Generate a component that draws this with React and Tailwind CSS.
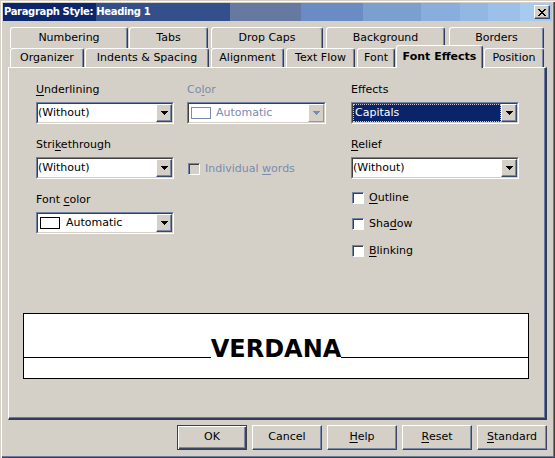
import React from 'react';

// Classic 3D dialog look: light face, white highlight, dark bluish shadow
const raised =
  'bg-[#d4d0c8] border border-t-white border-l-white border-r-[#3a4766] border-b-[#3a4766] shadow-[inset_-1px_-1px_0_#7a89aa]';
const sunken =
  'border border-t-[#7383a6] border-l-[#7383a6] border-r-white border-b-white';

function Arrow({ color = '#000' }) {
  return (
    <svg width="7" height="4" viewBox="0 0 7 4" shapeRendering="crispEdges">
      <rect x="0" y="0" width="7" height="1" fill={color} />
      <rect x="1" y="1" width="5" height="1" fill={color} />
      <rect x="2" y="2" width="3" height="1" fill={color} />
      <rect x="3" y="3" width="1" height="1" fill={color} />
    </svg>
  );
}

function Tab({ label, w, ml, active }) {
  if (active) {
    return (
      <div
        className={`${w} ${ml} relative z-10 h-[23px] -mb-px flex items-center justify-center bg-[#d4d0c8] rounded-t-[3px] border-t border-l border-white border-r border-r-[#2f3c5c] shadow-[inset_-1px_0_0_#7a89aa] font-bold`}
      >
        {label}
      </div>
    );
  }
  return (
    <div
      className={`${w} ${ml} h-full flex items-center justify-center bg-[#d4d0c8] rounded-t-[3px] border-t border-l border-white border-r border-r-[#2f3c5c] shadow-[inset_-1px_0_0_#7a89aa]`}
    >
      {label}
    </div>
  );
}

function Select({ children, disabled, focused }) {
  return (
    <div className={`h-[22px] flex ${sunken}`}>
      <div className="flex flex-1 bg-white border border-t-[#404040] border-l-[#404040] border-r-[#d4d0c8] border-b-[#d4d0c8]">
        {focused ? (
          <div className="flex-1 flex items-center bg-[#0a246a] border border-dotted border-[#c8c8d8] text-white pl-px">
            {children}
          </div>
        ) : (
          <div className="flex-1 flex items-center min-w-0">{children}</div>
        )}
        <div
          className={`w-[16px] flex items-center justify-center bg-[#d4d0c8] border ${
            disabled
              ? 'border-t-white border-l-white border-r-[#8a98b6] border-b-[#8a98b6]'
              : 'border-t-white border-l-white border-r-[#3a4766] border-b-[#3a4766] shadow-[inset_-1px_-1px_0_#7a89aa]'
          }`}
        >
          <Arrow color={disabled ? '#7a8bae' : '#000'} />
        </div>
      </div>
    </div>
  );
}

function Swatch({ disabled }) {
  return (
    <div
      className={`ml-[2px] w-[20px] h-[12px] bg-white border ${
        disabled ? 'border-[#7a8bae]' : 'border-black'
      }`}
    />
  );
}

function Check({ children, disabled, className = '' }) {
  return (
    <div className={`h-[12px] flex items-center ${className}`}>
      <div
        className={`ml-px w-[12px] h-[12px] shrink-0 ${sunken} shadow-[inset_1px_1px_0_#404040] ${
          disabled ? 'bg-[#d4d0c8]' : 'bg-white'
        }`}
      />
      <span className={`ml-[5px] leading-[14px] ${disabled ? 'text-[#7a8bae]' : ''}`}>{children}</span>
    </div>
  );
}

function Button({ children, primary }) {
  return (
    <div
      className={`w-[70px] h-[25px] flex items-center justify-center ${
        primary
          ? 'bg-[#d4d0c8] border border-[#404040] shadow-[inset_1px_1px_0_#fff,inset_-1px_-1px_0_#3a4766,inset_-2px_-2px_0_#7a89aa]'
          : raised
      }`}
    >
      {children}
    </div>
  );
}

const U = ({ children }) => <span className="underline underline-offset-[2px]">{children}</span>;

export default function App() {
  return (
    <div className="w-[555px] h-[458px] bg-[#d4d0c8] px-[3px] pt-[3px] flex flex-col text-[11px] text-black font-['DejaVu_Sans',Verdana,sans-serif] shadow-[inset_1px_1px_0_#d4d0c8,inset_2px_2px_0_#fff,inset_-1px_-1px_0_#404040,inset_-2px_-2px_0_#6a7aa0]">
      {/* title bar */}
      <div className="h-[18px] flex items-center justify-between bg-[image:linear-gradient(90deg,#0c266b_0_93px,#33508d_93px_227px,#6679a1_227px_298px,#6a8bc3_298px_360px,#7ba0d0_360px_418px,#89addc_418px_457px,#93b7e3_457px_485px,#9cc0ea_485px_517px,#a6caf0_517px)]">
        <span className="pl-px text-white font-bold text-[10px] tracking-[-0.35px] leading-none">Paragraph Style: Heading 1</span>
        <div className={`mr-[2px] w-[16px] h-[14px] flex items-center justify-center ${raised}`}>
          <svg width="8" height="7" viewBox="0 0 8 7" shapeRendering="crispEdges">
            <path d="M0 0h2l2 2.5L6 0h2L5 3.5 8 7H6L4 4.5 2 7H0l3-3.5z" fill="#000" />
          </svg>
        </div>
      </div>

      {/* tab rows */}
      <div className="mt-[6px] h-[21px] flex">
        <Tab label="Numbering" w="w-[118px]" ml="ml-[7px]" />
        <Tab label="Tabs" w="w-[79px]" ml="ml-[1px]" />
        <Tab label="Drop Caps" w="w-[112px]" ml="ml-[3px]" />
        <Tab label="Background" w="w-[119px]" ml="ml-[3px]" />
        <Tab label="Borders" w="w-[95px]" ml="ml-[4px]" />
      </div>
      <div className="h-[19px] flex items-end">
        <Tab label="Organizer" w="w-[74px]" ml="ml-[7px]" />
        <Tab label="Indents & Spacing" w="w-[124px]" ml="ml-[1px]" />
        <Tab label="Alignment" w="w-[73px]" ml="ml-[2px]" />
        <Tab label="Text Flow" w="w-[69px]" ml="ml-[2px]" />
        <Tab label="Font" w="w-[38px]" ml="ml-[2px]" />
        <Tab label="Font Effects" w="w-[87px]" ml="ml-[1px]" active />
        <Tab label="Position" w="w-[60px]" ml="ml-[1px]" />
      </div>

      {/* tab page */}
      <div className="ml-[5px] w-[539px] h-[353px] flex flex-col pt-[14px] border-t border-l border-white border-r-2 border-b-2 border-r-[#2f3c5c] border-b-[#2f3c5c] shadow-[inset_-1px_-1px_0_#6a7aa0]">
        <div className="h-[231px] flex leading-[14px]">
          <div className="ml-[27px] w-[138px] flex flex-col">
            <span className="h-[14px] pt-px"><U>U</U>nderlining</span>
            <div className="mt-[6px]">
              <Select>(Without)</Select>
            </div>
            <span className="mt-[13px] h-[14px] pt-px">Stri<U>k</U>ethrough</span>
            <div className="mt-[6px]">
              <Select>(Without)</Select>
            </div>
            <span className="mt-[13px] h-[14px] pt-px">Font <U>c</U>olor</span>
            <div className="mt-[6px]">
              <Select>
                <Swatch />
                <span className="ml-[6px]">Automatic</span>
              </Select>
            </div>
          </div>

          <div className="ml-[13px] w-[139px] flex flex-col">
            <span className="h-[14px] pt-px text-[#7a8bae]">Co<U>l</U>or</span>
            <div className="mt-[6px]">
              <Select disabled>
                <Swatch disabled />
                <span className="ml-[5px] text-[#7a8bae]">Automatic</span>
              </Select>
            </div>
            <Check disabled className="mt-[39px]">
              Individual <U>w</U>ords
            </Check>
          </div>

          <div className="ml-[25px] w-[168px] flex flex-col">
            <span className="h-[14px] pt-px">Effects</span>
            <div className="mt-[6px]">
              <Select focused>Capitals</Select>
            </div>
            <span className="mt-[13px] h-[14px] pt-px"><U>R</U>elief</span>
            <div className="mt-[6px]">
              <Select>(Without)</Select>
            </div>
            <Check className="mt-[13px]"><U>O</U>utline</Check>
            <Check className="mt-[14px]">Sha<U>d</U>ow</Check>
            <Check className="mt-[15px]"><U>B</U>linking</Check>
          </div>
        </div>

        {/* preview */}
        <div className="ml-[14px] w-[506px] h-[66px] bg-white border border-black">
          <div className="mt-[26px] h-[18px] flex items-end">
            <div className="flex-1 h-px bg-black" />
            <span className="text-[24px] leading-[18px] font-bold">VERDANA</span>
            <div className="flex-1 h-px bg-black" />
          </div>
        </div>
      </div>

      {/* dialog buttons */}
      <div className="mt-[5px] pr-[5px] flex justify-end gap-[5px]">
        <Button primary>OK</Button>
        <Button>Cancel</Button>
        <Button><U>H</U>elp</Button>
        <Button><U>R</U>eset</Button>
        <Button><U>S</U>tandard</Button>
      </div>
    </div>
  );
}
